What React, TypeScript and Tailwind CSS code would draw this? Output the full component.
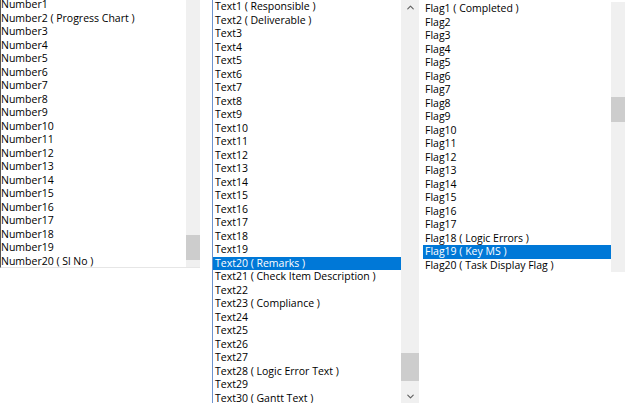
import { ChevronUp, ChevronDown } from 'lucide-react';

const numbers = Array.from({ length: 20 }, (_, i) => {
  const n = i + 1;
  if (n === 2) return 'Number2 ( Progress Chart )';
  if (n === 20) return 'Number20 ( Sl No )';
  return `Number${n}`;
});

const textLabels: Record<number, string> = {
  1: 'Responsible',
  2: 'Deliverable',
  20: 'Remarks',
  21: 'Check Item Description',
  23: 'Compliance',
  28: 'Logic Error Text',
  30: 'Gantt Text',
};
const texts = Array.from({ length: 30 }, (_, i) => {
  const n = i + 1;
  return textLabels[n] ? `Text${n} ( ${textLabels[n]} )` : `Text${n}`;
});

const flagLabels: Record<number, string> = {
  1: 'Completed',
  18: 'Logic Errors',
  19: 'Key MS',
  20: 'Task Display Flag',
};
const flags = Array.from({ length: 20 }, (_, i) => {
  const n = i + 1;
  return flagLabels[n] ? `Flag${n} ( ${flagLabels[n]} )` : `Flag${n}`;
});

function Row({ label, selected }: { label: string; selected?: boolean }) {
  return (
    <div
      className={`h-[13.5px] leading-[13.5px] whitespace-nowrap ${
        selected ? 'bg-[#0078d7] text-white' : 'text-black'
      }`}
    >
      <span className="pl-[2px]">{label}</span>
    </div>
  );
}

export default function App() {
  return (
    <div
      className="flex w-[633px] h-[403px] bg-white overflow-hidden text-[10.5px]"
      style={{ fontFamily: '"Open Sans", "Noto Sans", sans-serif' }}
    >
      {/* Number list */}
      <div className="w-[212px] flex flex-col">
        <div className="flex h-[268px] border-l border-[#555] border-b border-b-[#e6e6e6] w-[200px]">
          <div className="flex-1 overflow-hidden">
            <div className="-mt-[2px] -ml-[2px]">
              {numbers.map((t) => (
                <Row key={t} label={t} />
              ))}
            </div>
          </div>
          <div className="w-[14px] bg-[#f0f0f0] flex flex-col">
            <div className="h-[235px]" />
            <div className="h-[25px] bg-[#cdcdcd]" />
          </div>
        </div>
      </div>

      {/* Text list */}
      <div className="w-[207px] flex border-l border-[#6d93d0]">
        <div className="flex-1 overflow-hidden">
          <div className="mt-0">
            {texts.map((t, i) => (
              <Row key={t} label={t} selected={i === 19} />
            ))}
          </div>
        </div>
        <div className="w-[18px] bg-[#f0f0f0] flex flex-col items-center">
          <ChevronUp className="mt-[2px] text-[#606060]" size={11} strokeWidth={2.5} />
          <div className="h-[340px]" />
          <div className="w-full h-[28px] bg-[#cdcdcd]" />
          <div className="flex-1" />
          <ChevronDown className="mb-[1px] text-[#606060]" size={11} strokeWidth={2.5} />
        </div>
      </div>

      {/* Flag list */}
      <div className="flex-1 flex flex-col pl-[3px]">
        <div className="flex h-[272px] w-[203px]">
          <div className="flex-1 overflow-hidden">
            <div className="mt-[2px] pl-[1px]">
              {flags.map((t, i) => (
                <Row key={t} label={t} selected={i === 18} />
              ))}
            </div>
          </div>
          <div className="w-[14px] bg-[#f0f0f0] flex flex-col mt-[2px]">
            <div className="h-[95px]" />
            <div className="h-[25px] bg-[#cdcdcd]" />
          </div>
        </div>
      </div>
    </div>
  );
}
